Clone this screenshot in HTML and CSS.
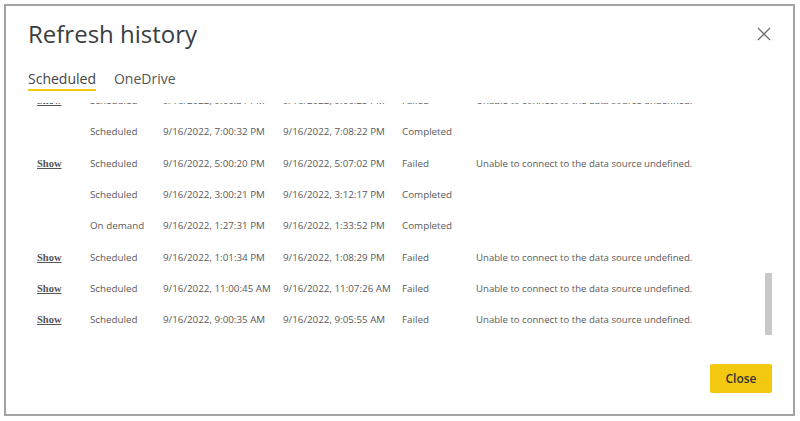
FILE: index.html
```html
<!DOCTYPE html>
<html>
<head>
<meta charset="utf-8">
<link rel="stylesheet" href="styles.css">
</head>
<body>
<div class="dialog">
  <div class="header">
    <h1 class="title">Refresh history</h1>
    <button class="close-x" aria-label="Close">
      <svg width="14" height="14" viewBox="0 0 14 14"><path d="M1 1 L13 13 M13 1 L1 13" stroke="#6f6f6f" stroke-width="1.3" fill="none"/></svg>
    </button>
  </div>
  <div class="tabs">
    <span class="tab active">Scheduled</span>
    <span class="tab">OneDrive</span>
  </div>
  <div class="scroll">
    <div class="rows">
      <div class="row"><span class="c1"><a class="show">Show</a></span><span class="c2">Scheduled</span><span class="c3">9/16/2022, 9:00:31 PM</span><span class="c4">9/16/2022, 9:06:25 PM</span><span class="c5">Failed</span><span class="c6">Unable to connect to the data source undefined.</span></div>
      <div class="row"><span class="c1"></span><span class="c2">Scheduled</span><span class="c3">9/16/2022, 7:00:32 PM</span><span class="c4">9/16/2022, 7:08:22 PM</span><span class="c5">Completed</span><span class="c6"></span></div>
      <div class="row"><span class="c1"><a class="show">Show</a></span><span class="c2">Scheduled</span><span class="c3">9/16/2022, 5:00:20 PM</span><span class="c4">9/16/2022, 5:07:02 PM</span><span class="c5">Failed</span><span class="c6">Unable to connect to the data source undefined.</span></div>
      <div class="row"><span class="c1"></span><span class="c2">Scheduled</span><span class="c3">9/16/2022, 3:00:21 PM</span><span class="c4">9/16/2022, 3:12:17 PM</span><span class="c5">Completed</span><span class="c6"></span></div>
      <div class="row"><span class="c1"></span><span class="c2">On demand</span><span class="c3">9/16/2022, 1:27:31 PM</span><span class="c4">9/16/2022, 1:33:52 PM</span><span class="c5">Completed</span><span class="c6"></span></div>
      <div class="row"><span class="c1"><a class="show">Show</a></span><span class="c2">Scheduled</span><span class="c3">9/16/2022, 1:01:34 PM</span><span class="c4">9/16/2022, 1:08:29 PM</span><span class="c5">Failed</span><span class="c6">Unable to connect to the data source undefined.</span></div>
      <div class="row"><span class="c1"><a class="show">Show</a></span><span class="c2">Scheduled</span><span class="c3">9/16/2022, 11:00:45 AM</span><span class="c4">9/16/2022, 11:07:26 AM</span><span class="c5">Failed</span><span class="c6">Unable to connect to the data source undefined.</span></div>
      <div class="row"><span class="c1"><a class="show">Show</a></span><span class="c2">Scheduled</span><span class="c3">9/16/2022, 9:00:35 AM</span><span class="c4">9/16/2022, 9:05:55 AM</span><span class="c5">Failed</span><span class="c6">Unable to connect to the data source undefined.</span></div>
    </div>
    <div class="scrollbar"></div>
  </div>
  <div class="footer">
    <button class="btn-close">Close</button>
  </div>
</div>
</body>
</html>
```
FILE: styles.css
```css
html, body {
  margin: 0;
  padding: 0;
  background: #ffffff;
}
body {
  font-family: "Open Sans", "Noto Sans", sans-serif;
  color: #3b3b3b;
}
.dialog {
  box-sizing: border-box;
  margin: 4px 0 0 4px;
  width: 791px;
  height: 412px;
  border: 2px solid #a3a3a3;
  background: #fff;
  display: flex;
  flex-direction: column;
}
.header {
  display: flex;
  justify-content: space-between;
  align-items: flex-start;
  padding: 12px 22px 0 22px;
}
.title {
  margin: 0;
  font-size: 24px;
  font-weight: 400;
  line-height: 32px;
  color: #3a3d42;
}
.close-x {
  border: 0;
  background: none;
  padding: 0;
  margin: 9px 0 0 0;
  width: 14px;
  height: 14px;
  display: flex;
}
.tabs {
  display: flex;
  gap: 18px;
  padding: 20px 22px 0 22px;
}
.tab {
  font-size: 14px;
  line-height: 18px;
  color: #555;
  padding-bottom: 1px;
  border-bottom: 2px solid transparent;
}
.tab.active {
  color: #444;
  border-bottom-color: #f2c811;
}
.scroll {
  position: relative;
  height: 237px;
  overflow: hidden;
  margin-top: 12px;
}
.rows {
  margin-top: -18px;
}
.row {
  display: grid;
  grid-template-columns: 53px 73px 120px 119px 74px 1fr;
  padding-left: 31px;
  height: 31.3px;
  align-items: center;
  font-size: 9.8px;
  color: #5a5a5a;
  white-space: nowrap;
}
.c6 {
  font-size: 9.6px;
}
.show {
  font-family: "Liberation Serif", "DejaVu Serif", serif;
  font-weight: 700;
  font-size: 10.5px;
  color: #555;
  text-decoration: underline;
}
.scrollbar {
  position: absolute;
  right: 21px;
  top: 170px;
  width: 7px;
  height: 62px;
  background: #c8c8c8;
}
.footer {
  display: flex;
  justify-content: flex-end;
  padding: 24px 21px 0 0;
}
.btn-close {
  width: 62px;
  height: 29px;
  border: 0;
  border-radius: 2px;
  background: #f2c811;
  font-family: "Open Sans", "Noto Sans", sans-serif;
  font-size: 12px;
  font-weight: 600;
  color: #333;
}
```
